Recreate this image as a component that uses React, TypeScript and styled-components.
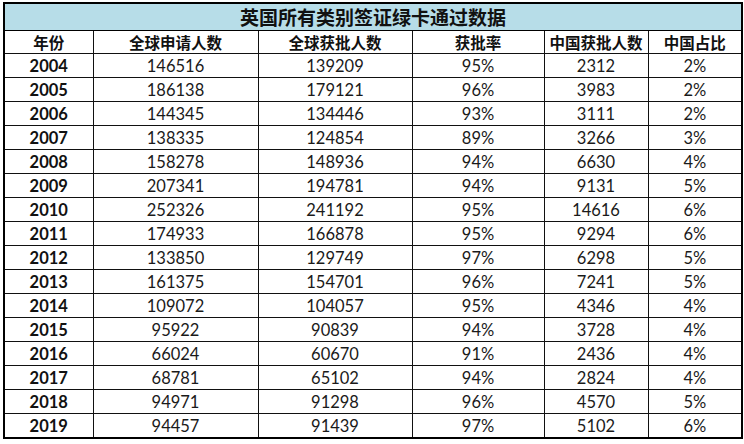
import React from "react";
import styled, { createGlobalStyle } from "styled-components";

const GlobalStyle = createGlobalStyle`
  html, body { margin: 0; padding: 0; background: #ffffff; }
  body { font-family: Lato, "Liberation Sans", "Noto Sans CJK SC", sans-serif; color: #111; }
`;

const Page = styled.div`
  padding: 2px 0 0 3px;
`;

const Table = styled.table`
  width: 738px;
  table-layout: fixed;
  border-collapse: collapse;
  border: 2px solid #000;
`;

const Cell = styled.td`
  border: 1px solid #111;
  padding: 0;
  text-align: center;
  vertical-align: middle;
  white-space: nowrap;
  overflow: hidden;
`;

const TitleCell = styled(Cell)`
  height: 26px;
  background: #b7dde8;
  font-family: "Noto Sans CJK SC", sans-serif;
  font-weight: 700;
  font-size: 19px;
  line-height: 26px;
  border-bottom: 1px solid #000;
`;

const HeadCell = styled(Cell)`
  height: 22px;
  font-family: "Noto Sans CJK SC", sans-serif;
  font-weight: 700;
  font-size: 15.5px;
  line-height: 22px;
`;

const YearCell = styled(Cell)`
  height: 23px;
  font-family: Lato, "Liberation Sans", sans-serif;
  font-weight: 700;
  font-size: 16.5px;
`;

const DataCell = styled(Cell)`
  height: 23px;
  font-family: Lato, "Liberation Sans", sans-serif;
  font-size: 16.5px;
  font-weight: 400;
  color: #1a1a1a;
`;

const widths = [89, 165, 154, 132, 104, 94];
const headers = ["年份", "全球申请人数", "全球获批人数", "获批率", "中国获批人数", "中国占比"];

const rows: [string, string, string, string, string, string][] = [
  ["2004", "146516", "139209", "95%", "2312", "2%"],
  ["2005", "186138", "179121", "96%", "3983", "2%"],
  ["2006", "144345", "134446", "93%", "3111", "2%"],
  ["2007", "138335", "124854", "89%", "3266", "3%"],
  ["2008", "158278", "148936", "94%", "6630", "4%"],
  ["2009", "207341", "194781", "94%", "9131", "5%"],
  ["2010", "252326", "241192", "95%", "14616", "6%"],
  ["2011", "174933", "166878", "95%", "9294", "6%"],
  ["2012", "133850", "129749", "97%", "6298", "5%"],
  ["2013", "161375", "154701", "96%", "7241", "5%"],
  ["2014", "109072", "104057", "95%", "4346", "4%"],
  ["2015", "95922", "90839", "94%", "3728", "4%"],
  ["2016", "66024", "60670", "91%", "2436", "4%"],
  ["2017", "68781", "65102", "94%", "2824", "4%"],
  ["2018", "94971", "91298", "96%", "4570", "5%"],
  ["2019", "94457", "91439", "97%", "5102", "6%"],
];

export default function App() {
  return (
    <>
      <GlobalStyle />
      <Page>
        <Table>
          <colgroup>
            {widths.map((w, i) => (
              <col key={i} style={{ width: w }} />
            ))}
          </colgroup>
          <tbody>
            <tr>
              <TitleCell colSpan={6}>英国所有类别签证绿卡通过数据</TitleCell>
            </tr>
            <tr>
              {headers.map((h) => (
                <HeadCell key={h}>{h}</HeadCell>
              ))}
            </tr>
            {rows.map((r) => (
              <tr key={r[0]}>
                <YearCell>{r[0]}</YearCell>
                {r.slice(1).map((v, i) => (
                  <DataCell key={i}>{v}</DataCell>
                ))}
              </tr>
            ))}
          </tbody>
        </Table>
      </Page>
    </>
  );
}
